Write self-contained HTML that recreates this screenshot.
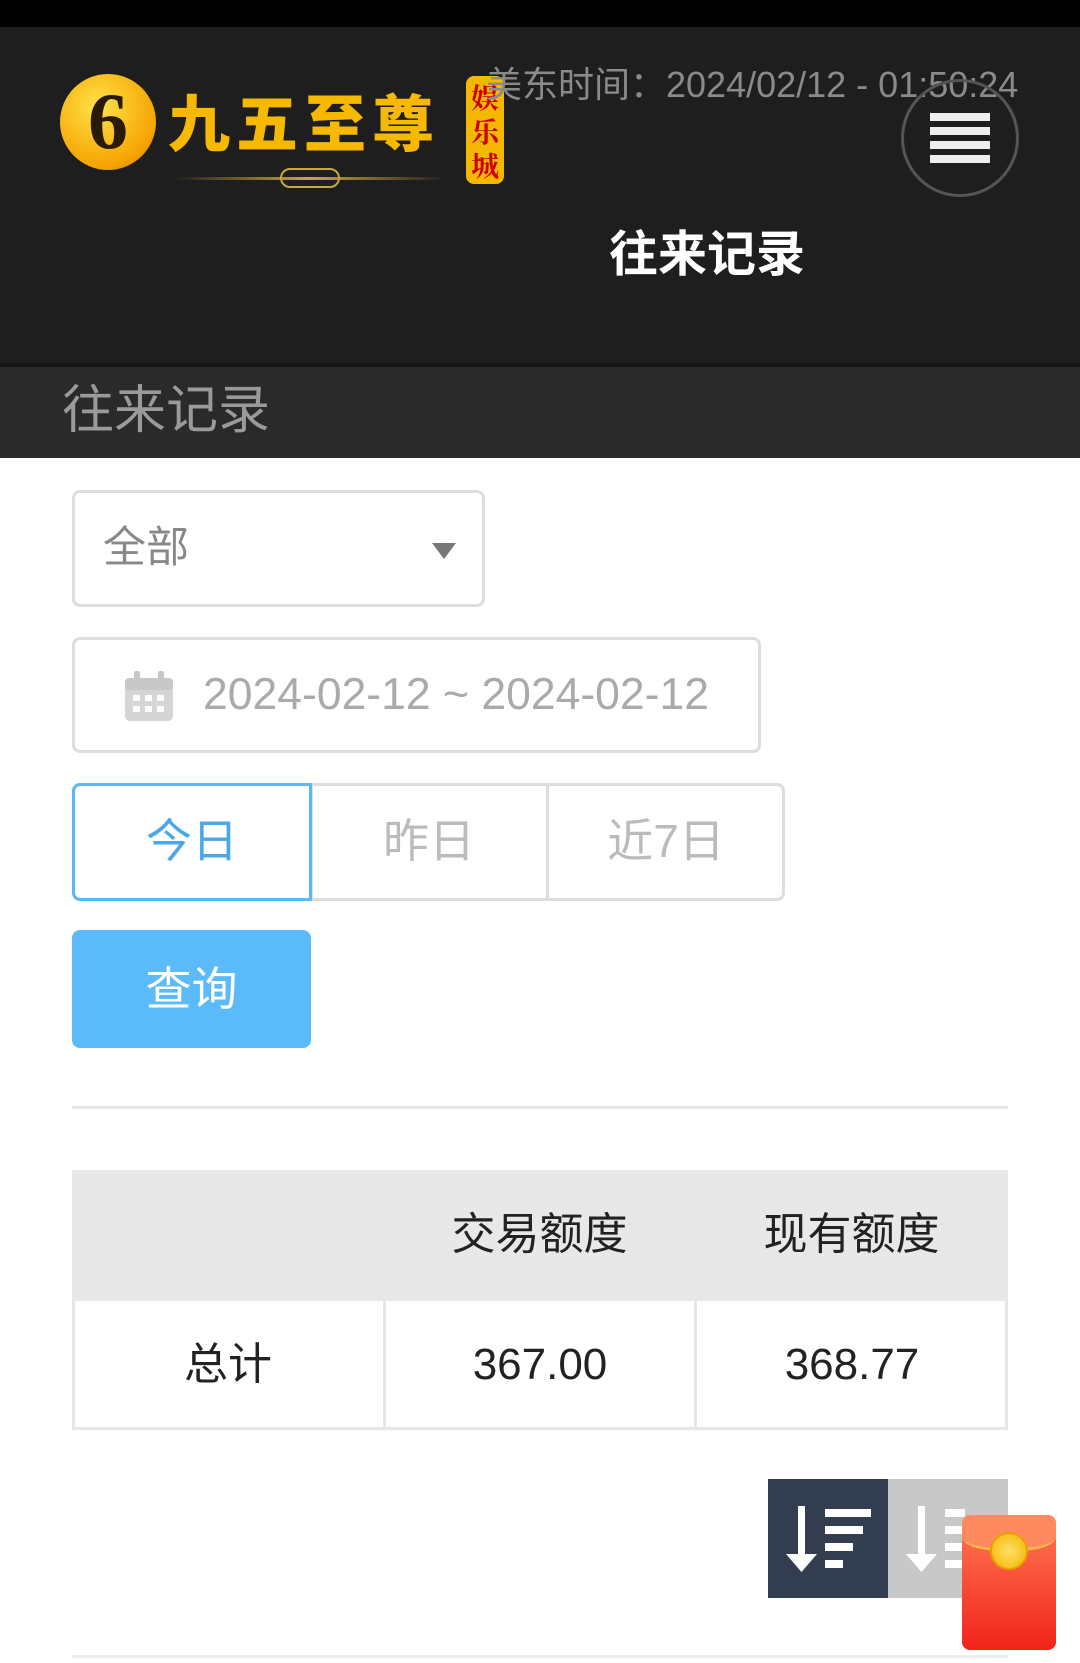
<!DOCTYPE html>
<html><head><meta charset="utf-8"><style>
*{margin:0;padding:0;box-sizing:border-box}
body{width:1080px;height:1663px;background:#fff;position:relative;overflow:hidden;font-family:"Liberation Sans","Noto Sans CJK SC",sans-serif}
.a{position:absolute}
</style></head><body>
<div class="a" style="left:0;top:0;width:1080px;height:27px;background:#000"></div>
<div class="a" style="left:0;top:27px;width:1080px;height:337px;background:#1e1e1e"></div>
<div class="a" style="left:0;top:363px;width:1080px;height:4px;background:#141414"></div>
<div class="a" style="left:0;top:367px;width:1080px;height:91px;background:#2a2a2a"></div>
<!-- logo -->
<div class="a" style="left:60px;top:74px;width:96px;height:96px;border-radius:50%;background:radial-gradient(circle at 40% 35%,#ffe34a,#f5a300 70%,#c07000)"></div>
<div class="a" style="left:60px;top:74px;width:96px;height:96px;text-align:center;font:bold 80px/96px 'Liberation Serif',serif;color:#2a1a00">6</div>
<div class="a" style="left:168px;top:84px;font:900 62px/70px 'Noto Sans CJK SC',sans-serif;color:#f7b900;letter-spacing:6px">九五至尊</div>
<div class="a" style="left:175px;top:177px;width:270px;height:3px;background:linear-gradient(90deg,transparent,#c9a640,transparent)"></div>
<div class="a" style="left:280px;top:168px;width:60px;height:20px;border:2px solid #c9a640;border-radius:10px"></div>
<div class="a" style="left:466px;top:76px;width:38px;height:108px;border-radius:8px;background:#f5b800;color:#c00;font:bold 28px/34px 'Noto Serif CJK SC',serif;text-align:center;padding-top:4px">娱<br>乐<br>城</div>
<div class="a" style="left:486px;top:63px;font-size:36px;color:#8a8a8a;line-height:44px">美东时间：2024/02/12 - 01:50:24</div>
<div class="a" style="left:901px;top:79px;width:118px;height:118px;border-radius:50%;border:3px solid #555"></div>
<div class="a" style="left:930px;top:113px;width:60px;height:8px;background:#eee"></div>
<div class="a" style="left:930px;top:127px;width:60px;height:8px;background:#eee"></div>
<div class="a" style="left:930px;top:141px;width:60px;height:8px;background:#eee"></div>
<div class="a" style="left:930px;top:155px;width:60px;height:8px;background:#eee"></div>
<div class="a" style="left:609px;top:226px;font-weight:bold;font-size:49px;line-height:58px;color:#fff">往来记录</div>
<div class="a" style="left:62px;top:381px;font-size:52px;line-height:60px;color:#9a9a9a">往来记录</div>
<!-- select -->
<div class="a" style="left:72px;top:490px;width:413px;height:117px;border:3px solid #ddd;border-radius:8px"></div>
<div class="a" style="left:103px;top:522px;font-size:43px;line-height:52px;color:#888">全部</div>
<div class="a" style="left:432px;top:543px;width:0;height:0;border-left:12px solid transparent;border-right:12px solid transparent;border-top:16px solid #777"></div>
<!-- date -->
<div class="a" style="left:72px;top:637px;width:689px;height:116px;border:3px solid #ddd;border-radius:8px"></div>
<svg class="a" style="left:124px;top:670px" width="50" height="52" viewBox="0 0 50 52"><rect x="1" y="8" width="48" height="43" rx="5" fill="#d5d5d5"/><rect x="1" y="8" width="48" height="12" rx="4" fill="#c8c8c8"/><rect x="10" y="1" width="6" height="14" rx="2" fill="#c8c8c8"/><rect x="34" y="1" width="6" height="14" rx="2" fill="#c8c8c8"/><g fill="#fff"><rect x="9" y="25" width="7" height="6"/><rect x="21" y="25" width="7" height="6"/><rect x="33" y="25" width="7" height="6"/><rect x="9" y="36" width="7" height="6"/><rect x="21" y="36" width="7" height="6"/><rect x="33" y="36" width="7" height="6"/></g></svg>
<div class="a" style="left:203px;top:668px;font-size:44.5px;line-height:54px;color:#aaa">2024-02-12 ~ 2024-02-12</div>
<!-- tabs -->
<div class="a" style="left:72px;top:783px;width:713px;height:118px;border:3px solid #ddd;border-radius:8px"></div>
<div class="a" style="left:310px;top:783px;width:3px;height:118px;background:#ddd"></div>
<div class="a" style="left:546px;top:783px;width:3px;height:118px;background:#ddd"></div>
<div class="a" style="left:72px;top:783px;width:240px;height:118px;border:3px solid #5cb8f0;border-radius:8px 0 0 8px"></div>
<div class="a" style="left:72px;top:813px;width:240px;text-align:center;font-size:46px;line-height:56px;color:#4aa8e8">今日</div>
<div class="a" style="left:311px;top:813px;width:236px;text-align:center;font-size:46px;line-height:56px;color:#bbb">昨日</div>
<div class="a" style="left:547px;top:813px;width:238px;text-align:center;font-size:46px;line-height:56px;color:#bbb">近7日</div>
<!-- button -->
<div class="a" style="left:72px;top:930px;width:239px;height:118px;background:#5bbafa;border-radius:8px;text-align:center;font-size:46px;line-height:118px;color:#fff">查询</div>
<div class="a" style="left:72px;top:1106px;width:936px;height:3px;background:#e6e6e6"></div>
<!-- table -->
<div class="a" style="left:72px;top:1170px;width:936px;height:131px;background:#e8e8e8"></div>
<div class="a" style="left:384px;top:1208px;width:311px;text-align:center;font-size:44px;line-height:54px;color:#222">交易额度</div>
<div class="a" style="left:695px;top:1208px;width:313px;text-align:center;font-size:44px;line-height:54px;color:#222">现有额度</div>
<div class="a" style="left:72px;top:1300px;width:936px;height:130px;border:3px solid #e6e6e6;border-top:none"></div>
<div class="a" style="left:383px;top:1300px;width:3px;height:130px;background:#e6e6e6"></div>
<div class="a" style="left:694px;top:1300px;width:3px;height:130px;background:#e6e6e6"></div>
<div class="a" style="left:72px;top:1338px;width:312px;text-align:center;font-size:44px;line-height:54px;color:#222">总计</div>
<div class="a" style="left:385px;top:1338px;width:310px;text-align:center;font-size:44px;line-height:54px;color:#222">367.00</div>
<div class="a" style="left:696px;top:1338px;width:312px;text-align:center;font-size:44px;line-height:54px;color:#222">368.77</div>
<!-- sort -->
<div class="a" style="left:768px;top:1479px;width:120px;height:119px;background:#323e50"></div>
<div class="a" style="left:888px;top:1479px;width:120px;height:119px;background:#c8c8c8"></div>
<svg class="a" style="left:768px;top:1479px" width="240" height="119"><g fill="#fff"><rect x="30" y="27" width="7" height="50"/><polygon points="18,75 49,75 33.5,93"/><rect x="57" y="30" width="46" height="8"/><rect x="57" y="47" width="38" height="8"/><rect x="57" y="64" width="28" height="8"/><rect x="57" y="81" width="18" height="8"/><rect x="150" y="27" width="7" height="50"/><polygon points="138,75 169,75 153.5,93"/><rect x="177" y="30" width="20" height="8"/><rect x="177" y="47" width="20" height="8"/><rect x="177" y="64" width="20" height="8"/><rect x="177" y="81" width="20" height="8"/></g></svg>
<!-- red packet -->
<div class="a" style="left:962px;top:1515px;width:94px;height:135px;border-radius:8px;background:linear-gradient(#ff7a55,#f2231a)"></div>
<div class="a" style="left:962px;top:1515px;width:94px;height:36px;border-radius:8px 8px 40% 40%;background:#ff8a60;border-bottom:3px solid #f7b84a"></div>
<div class="a" style="left:990px;top:1532px;width:38px;height:38px;border-radius:50%;background:radial-gradient(#ffe066,#f2b400);border:2px solid #e8a000"></div>
<div class="a" style="left:72px;top:1655px;width:936px;height:3px;background:#eee"></div>
</body></html>
